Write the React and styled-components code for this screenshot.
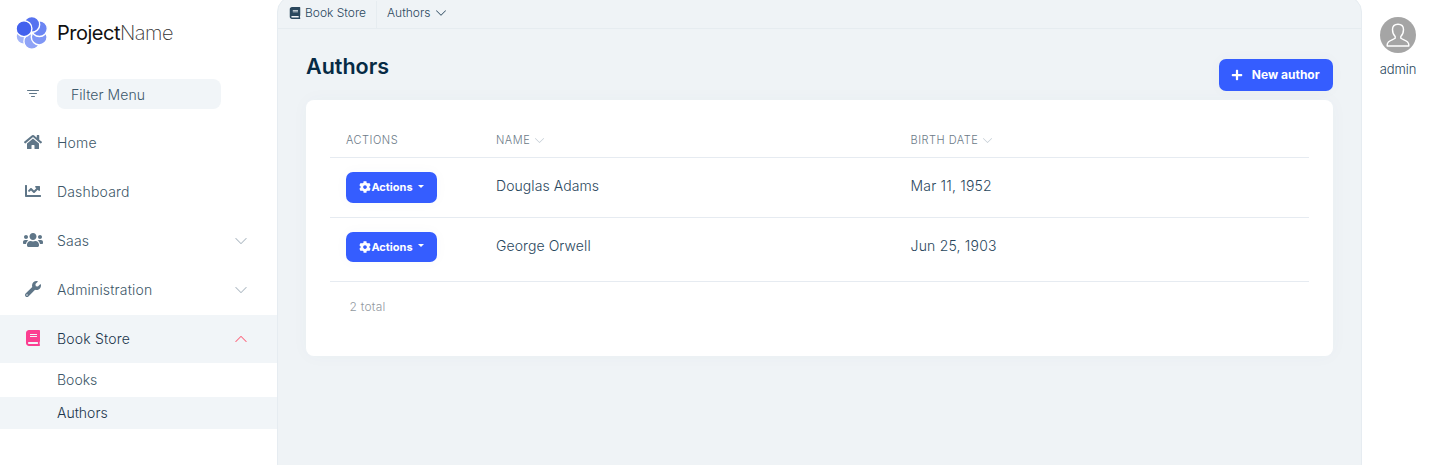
import React from "react";
import styled, { createGlobalStyle, css } from "styled-components";
import { FaHome, FaChartLine, FaUsers, FaWrench, FaBook, FaCog, FaPlus } from "react-icons/fa";
import { BsChevronDown, BsChevronUp, BsFilter } from "react-icons/bs";

const GlobalStyle = createGlobalStyle`
  *, *::before, *::after { box-sizing: border-box; }
  body {
    margin: 0;
    background: #fff;
    color: #2a475d;
    font-family: Inter, "Liberation Sans", sans-serif;
    font-size: 14px;
    font-weight: 350;
    line-height: 1.5;
  }
  button, input { font-family: inherit; font-weight: inherit; }
  svg { display: block; flex: none; }
`;

const Page = styled.div`
  display: flex;
  height: 465px;
  overflow: hidden;
`;

const Sidebar = styled.aside`
  width: 277px;
  flex: none;
`;

const Brand = styled.div`
  display: flex;
  align-items: center;
  gap: 9px;
  height: 66px;
  padding-left: 16px;
`;

const BrandName = styled.span`
  color: #111;
  font-size: 20px;
  font-weight: 400;
  letter-spacing: -0.5px;
`;

const BrandLight = styled.span`
  font-weight: 200;
  color: #333;
`;

const FilterRow = styled.div`
  display: flex;
  align-items: center;
  height: 30px;
  margin: 13px 0 10px;
`;

const IconSlot = styled.span`
  width: 57px;
  padding: 0 0 ${(p) => (p.$centered ? 0 : 2)}px 9px;
  flex: none;
  display: flex;
  justify-content: center;
  color: ${(p) => p.$color || "#5f7688"};
`;

const FilterInput = styled.input`
  width: 164px;
  height: 30px;
  padding: 1px 14px 0;
  border: 0;
  border-radius: 8px;
  outline: 0;
  background: #f1f5f8;
  font-size: 14px;
  letter-spacing: 0.06px;
  &::placeholder { color: #3c586b; opacity: 1; }
`;

const MenuItem = styled.a`
  display: flex;
  align-items: center;
  height: 48px;
  margin-bottom: 1px;
  padding-right: 29px;
  color: ${(p) => (p.$active ? "#1b364c" : "#3d5768")};
  background: ${(p) => (p.$active ? "#f1f5f8" : "transparent")};
`;

const MenuLabel = styled.span`
  flex: 1;
  padding-bottom: 1px;
  letter-spacing: 0.18px;
`;

const Arrow = styled.span`
  color: ${(p) => p.$color};
`;

const SubMenu = styled.div`
  margin-top: -1px;
`;

const SubItem = styled.a`
  display: flex;
  align-items: center;
  height: ${(p) => (p.$active ? 32 : 34)}px;
  padding: 0 0 1px 57px;
  ${(p) =>
    p.$active
      ? css`color: #1b364c; background: #f1f5f8;`
      : css`color: #3d5768;`}
`;

const Main = styled.main`
  width: 1085px;
  flex: none;
  height: 484px;
  margin-top: -4px;
  padding-top: 4px;
  border: 1px solid #e6ecf1;
  border-radius: 16px;
  background: #eff3f6;
`;

const Crumbs = styled.nav`
  display: flex;
  height: 28px;
  border-bottom: 1px solid #e6ecf0;
  font-size: 12px;
`;

const Crumb = styled.span`
  display: flex;
  align-items: center;
  gap: ${(p) => p.$gap}px;
  padding: 0 10px 3px 11px;
  & + & { border-left: 1px solid #e6ecf0; padding-left: 10px; }
`;

const Content = styled.div`
  padding: 0 28px;
`;

const TitleBar = styled.header`
  display: flex;
  align-items: flex-start;
  justify-content: space-between;
  height: 71px;
  padding-top: 21px;
`;

const Title = styled.h1`
  margin: 0;
  color: #062a44;
  font-size: 21.5px;
  font-weight: 570;
  line-height: 32px;
`;

const Button = styled.button`
  display: flex;
  align-items: center;
  justify-content: center;
  border: 0;
  border-radius: 7px;
  padding: 0;
  background: #355dff;
  color: #fff;
  font-weight: 700;
  box-shadow: 0 0 14px rgba(60, 90, 130, 0.03);
`;

const NewButton = styled(Button)`
  gap: 8.5px;
  width: 114px;
  height: 32px;
  margin-top: 9px;
  padding: 0 1px 1px 0;
  font-size: 12px;
`;

const ActionButton = styled(Button)`
  width: 91px;
  height: ${(p) => p.$height}px;
  padding-bottom: 1px;
  font-size: 11px;
`;

const Caret = styled.span`
  margin: -2px 0 0 5px;
  border: 3.5px solid transparent;
  border-top: 3px solid #fff;
  border-bottom: 0;
`;

const Card = styled.section`
  height: 256px;
  padding: 24px;
  border-radius: 8px;
  background: #fff;
  box-shadow: 0 0 18px rgba(60, 100, 130, 0.03);
`;

const Row = styled.div`
  display: grid;
  grid-template-columns: 150px 414.5px 1fr;
  align-items: flex-start;
  height: ${(p) => p.$height}px;
  padding: ${(p) => p.$top}px 16px 0;
  border-bottom: 1px solid #e6ebf1;
`;

const HeadCell = styled.span`
  display: flex;
  align-items: center;
  gap: 3.5px;
  color: #6b7a87;
  font-size: 11px;
  line-height: 16px;
  letter-spacing: 0.5px;
  text-transform: uppercase;
  svg { color: #c3ccd4; }
`;

const Cell = styled.span`
  padding-top: 3px;
  letter-spacing: ${(p) => p.$spacing || 0.08}px;
`;

const Total = styled.div`
  padding: 16px 19.5px;
  color: #939a9f;
  font-size: 12px;
  letter-spacing: 0.25px;
`;

const Account = styled.aside`
  flex: 1;
  display: flex;
  flex-direction: column;
  align-items: center;
  gap: 7px;
  padding: 17px 0 0 5px;
  font-size: 13px;
  letter-spacing: -0.1px;
`;

const petals = [
  [24, 36.4, "#a3b4f8"],
  [31.8, 41.4, "#8fa3f7"],
  [39.2, 37, "#7f96f5"],
  [39.4, 28.6, "#6b85f3"],
  [31.8, 24.4, "#5672f0"],
  [24, 28.7, "#4361ee"],
];

function Logo() {
  return (
    <svg width="32" height="34" viewBox="16 16 32 34">
      {petals.map(([x, y, fill]) => (
        <circle key={fill} cx={x} cy={y} r="7.9" fill={fill} stroke="#fff" strokeWidth="1.4" />
      ))}
    </svg>
  );
}

function Avatar() {
  return (
    <svg width="36" height="36" viewBox="0 0 36 36">
      <circle cx="18" cy="18" r="18" fill="#a5a5a5" />
      <path
        d="M18 7.200c-3.500 0-5.500 2-5.500 5.300 0 3.200 1 5.400 2.700 6.900v1.900c-2.200 1.600-8 2.200-8 6.400v1.300h21.600v-1.300c0-4.200-5.800-4.800-8-6.400v-1.900c1.700-1.500 2.700-3.700 2.700-6.900 0-3.300-2-5.300-5.500-5.300z"
        fill="none"
        stroke="#fff"
        strokeWidth="1.400"
        strokeLinejoin="round"
      />
    </svg>
  );
}

const menu = [
  { label: "Home", icon: FaHome, size: 18 },
  { label: "Dashboard", icon: FaChartLine },
  { label: "Saas", icon: FaUsers, size: 20, arrow: true },
  { label: "Administration", icon: FaWrench, arrow: true },
  { label: "Book Store", icon: FaBook, arrow: true, active: true },
];

const authors = [
  { name: "Douglas Adams", born: "Mar 11, 1952", height: 60, button: 31 },
  { name: "George Orwell", born: "Jun 25, 1903", height: 64, button: 30 },
];

export default function App() {
  return (
    <Page>
      <GlobalStyle />
      <Sidebar>
        <Brand>
          <Logo />
          <BrandName>Project<BrandLight>Name</BrandLight></BrandName>
        </Brand>
        <FilterRow>
          <IconSlot $centered><BsFilter size={16} /></IconSlot>
          <FilterInput placeholder="Filter Menu" />
        </FilterRow>
        {menu.map(({ label, icon: Icon, size, arrow, active }) => (
          <MenuItem key={label} $active={active}>
            <IconSlot $color={active && "#fb3e91"}><Icon size={size || 16} /></IconSlot>
            <MenuLabel>{label}</MenuLabel>
            {arrow && (
              <Arrow $color={active ? "#fb6a80" : "#b3bec7"}>
                {active ? <BsChevronUp size={14} /> : <BsChevronDown size={14} />}
              </Arrow>
            )}
          </MenuItem>
        ))}
        <SubMenu>
          <SubItem>Books</SubItem>
          <SubItem $active>Authors</SubItem>
        </SubMenu>
      </Sidebar>
      <Main>
        <Crumbs>
          <Crumb $gap={4}><FaBook size={12} />Book Store</Crumb>
          <Crumb $gap={5}>Authors<BsChevronDown size={12} /></Crumb>
        </Crumbs>
        <Content>
          <TitleBar>
            <Title>Authors</Title>
            <NewButton><FaPlus size={12} />New author</NewButton>
          </TitleBar>
          <Card>
            <Row $height={34} $top={8}>
              <HeadCell>Actions</HeadCell>
              <HeadCell>Name<BsChevronDown size={11} /></HeadCell>
              <HeadCell>Birth date<BsChevronDown size={11} /></HeadCell>
            </Row>
            {authors.map((a) => (
              <Row key={a.name} $height={a.height} $top={14}>
                <ActionButton $height={a.button}><FaCog size={12} />Actions<Caret /></ActionButton>
                <Cell>{a.name}</Cell>
                <Cell $spacing={0.2}>{a.born}</Cell>
              </Row>
            ))}
            <Total>2 total</Total>
          </Card>
        </Content>
      </Main>
      <Account>
        <Avatar />
        admin
      </Account>
    </Page>
  );
}
